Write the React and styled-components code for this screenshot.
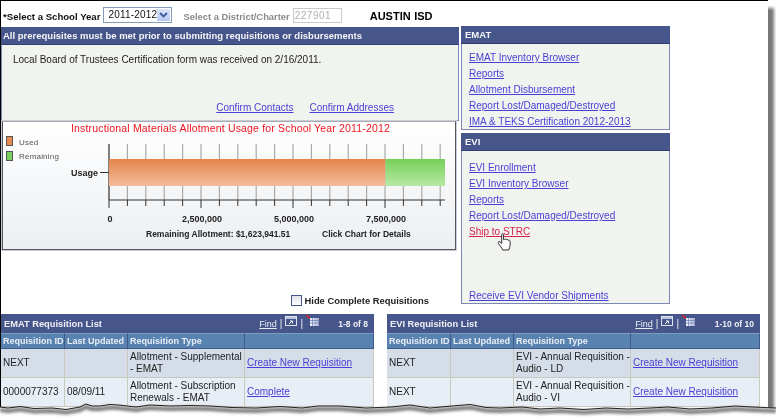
import React from "react";
import styled, { createGlobalStyle } from "styled-components";

const Global = createGlobalStyle`
  html, body { margin: 0; padding: 0; background: #fff; }
  body { font-family: "Liberation Sans", Arial, sans-serif; font-size: 10px; color: #111; }
`;

const Frame = styled.div`
  position: relative;
  width: 776px;
  height: 420px;
  overflow: hidden;
  background: #fff;
`;

const Sheet = styled.div`
  width: 767px;
  height: 500px;
  box-sizing: content-box;
  background: #fff;
  border-top: 1px solid #000;
  border-left: 1px solid #000;
  box-shadow: 6px 8px 3px #777;
  filter: blur(0.3px);
`;

const Columns = styled.div`
  display: flex;
  gap: 2px;
  height: 304px;
`;

const LeftCol = styled.div`
  width: 458px;
  display: flex;
  flex-direction: column;
`;

const YearBar = styled.div`
  height: 26px;
  display: flex;
  align-items: center;
  padding: 4px 0 0 2px;
  box-sizing: border-box;
  font-size: 9.6px;
  font-weight: bold;
  white-space: nowrap;
`;

const YearSelect = styled.div`
  width: 63px;
  height: 14px;
  margin: -3px 11px 0 3px;
  border: 1px solid #7f9db9;
  display: flex;
  align-items: center;
  justify-content: space-between;
  font-weight: normal;
  font-size: 10px;
  letter-spacing: 0.2px;
  padding-left: 4px;
`;

const SelectArrow = styled.span`
  width: 13px;
  height: 12px;
  margin-right: 1px;
  background: linear-gradient(#dbe5fa, #b5c8f0);
  display: flex;
  align-items: center;
  justify-content: center;
`;

const DisabledLabel = styled.span`
  color: #8a8a8a;
  font-size: 9.4px;
`;

const DistrictInput = styled.div`
  width: 46px;
  height: 13px;
  margin: -2px 0 0 3px;
  border: 1px solid #c9c9c9;
  color: #b0b0b0;
  font-weight: normal;
  font-size: 10px;
  padding-left: 1px;
  line-height: 13px;
  letter-spacing: 0.5px;
`;

const District = styled.span`
  margin-left: 28px;
  font-size: 11px;
  color: #000;
  word-spacing: 0.5px;
`;

const Panel = styled.section`
  background: #f1f3ef;
  border: 1px solid #7b88b4;
  border-top: 0;
  height: ${(p) => p.$height}px;
  box-sizing: border-box;
`;

const PanelTitle = styled.h2`
  margin: 0 -1px;
  height: 18px;
  line-height: 17px;
  background: #47568a;
  color: #f4f5f8;
  font-size: 9.5px;
  font-weight: bold;
  padding-left: ${(p) => p.$inset}px;
  border-bottom: 1px solid #2f3d70;
  box-sizing: border-box;
  white-space: nowrap;
`;

const Notice = styled.p`
  margin: 0;
  padding: 8px 0 0 11px;
  height: 45px;
  line-height: 13px;
  color: #222;
`;

const ConfirmRow = styled.div`
  display: flex;
  justify-content: flex-end;
  gap: 16px;
  padding: 2px 64px 0 0;
`;

const Link = styled.a`
  color: ${(p) => (p.$hot ? "#d8204e" : "#4a3fd6")};
  text-decoration: underline;
  font-size: 10px;
  line-height: 16px;
  white-space: nowrap;
`;

const ChartBox = styled.div`
  margin: 0 3px 0 1px;
  height: 129px;
  box-sizing: border-box;
  border: 1px solid #555;
  border-top-color: #aaa;
  background: linear-gradient(#fff, #eceff2);
  box-shadow: 0 0 0 1px #c8ccd8;
`;

const HideRow = styled.label`
  margin-top: auto;
  padding: 0 30px 0 0;
  height: 10px;
  display: flex;
  justify-content: flex-end;
  align-items: center;
  gap: 3px;
  font-weight: bold;
  font-size: 9.4px;
  color: #222;
  white-space: nowrap;
`;

const Box = styled.span`
  width: 9px;
  height: 9px;
  border: 1px solid #47568a;
  background: linear-gradient(#dfe3ea, #fff);
`;

const RightCol = styled.div`
  width: 209px;
  padding-top: 25px;
  display: flex;
  flex-direction: column;
  gap: 3px;
`;

const LinkList = styled.nav`
  display: flex;
  flex-direction: column;
  align-items: flex-start;
  padding: ${(p) => p.$top}px 0 0 7px;
  height: ${(p) => p.$fill}px;
  box-sizing: border-box;
`;

const Spacer = styled.div`
  flex: 1;
`;

const Tables = styled.div`
  display: flex;
  gap: 13px;
  margin-top: 9px;
`;

const Table = styled.div`
  width: 373px;
  flex: none;
`;

const TableBar = styled.div`
  height: 19px;
  background: #47568a;
  color: #eef0f5;
  display: flex;
  align-items: center;
  font-weight: bold;
  padding: 0 6px 0 3px;
`;

const TableTitle = styled.span`
  flex: 1;
  font-size: 9.3px;
`;

const Tools = styled.span`
  display: flex;
  align-items: center;
  gap: 3px;
  font-size: 10px;
  font-weight: normal;
  color: #e8ebf3;
`;

const FindLink = styled.span`
  text-decoration: underline;
  font-size: 9px;
`;

const Count = styled.span`
  width: ${(p) => p.$w}px;
  text-align: right;
  font-size: 8.5px;
  font-weight: bold;
`;

const ToolIcon = styled.svg`
  margin-top: -4px;
`;

const Grid = styled.div`
  display: grid;
  grid-template-columns: 64px 63px 117px 129px;
`;

const HeadCell = styled.div`
  height: 16px;
  line-height: 14px;
  box-sizing: border-box;
  background: #5882b0;
  color: #e9eef5;
  font-weight: bold;
  font-size: 9px;
  padding-left: 2px;
  white-space: nowrap;
  overflow: hidden;
  border-right: 1px solid #3d5a8a;
  border-bottom: 1px solid #3d5a8a;
  border-top: 1px solid #7d9cc4;
`;

const Cell = styled.div`
  height: 29px;
  box-sizing: border-box;
  background: ${(p) => (p.$odd ? "#e8eef5" : "#d5dde8")};
  border-right: 1px solid #c9c9be;
  border-bottom: 1px solid #c9c9be;
  padding-left: 2px;
  display: flex;
  align-items: center;
  line-height: 12px;
  color: #222;
  font-size: 10px;
`;

const Torn = styled.svg`
  position: absolute;
  left: 0;
  bottom: 0;
  width: 776px;
  height: 20px;
`;

const Cursor = styled.svg`
  position: absolute;
  left: 497px;
  top: 233px;
  width: 15px;
  height: 18px;
`;

function Chart() {
  const ticks = Array.from({ length: 19 }, (_, i) => 108 + i * 18.4);
  return (
    <svg width="454" height="127" viewBox="2 122 454 127">
      <defs>
        <linearGradient id="used" x1="0" x2="0" y1="0" y2="1">
          <stop offset="0" stopColor="#e5854a" />
          <stop offset="1" stopColor="#f3bc9c" />
        </linearGradient>
        <linearGradient id="left" x1="0" x2="0" y1="0" y2="1">
          <stop offset="0" stopColor="#76d05a" />
          <stop offset="1" stopColor="#b8e8a4" />
        </linearGradient>
      </defs>
      <g fontFamily="'Liberation Sans', Arial, sans-serif">
        <text x="229.5" y="132" textAnchor="middle" fontSize="10.5" fill="#f0141e" letterSpacing=".17">
          Instructional Materials Allotment Usage for School Year 2011-2012
        </text>
        <rect x="5.5" y="136.5" width="6" height="9" fill="#e98a4e" stroke="#555" />
        <rect x="5.5" y="151.5" width="6" height="9" fill="#7ad05c" stroke="#555" />
        <text x="18" y="145" fontSize="8" fill="#555" letterSpacing=".2">Used</text>
        <text x="18" y="159" fontSize="8" fill="#555" letterSpacing=".2">Remaining</text>
        {ticks.map((x) => (
          <line key={x} x1={x} x2={x} y1="144" y2="200" stroke="#aaa" strokeWidth="1.2" />
        ))}
        {ticks.map((x, i) => (
          <line key={i} x1={x} x2={x} y1="200" y2={i % 5 === 0 ? 208 : 206} stroke="#333" />
        ))}
        <line x1="108" x2="108" y1="144" y2="200" stroke="#333" />
        <line x1="108" x2="444" y1="200" y2="200" stroke="#333" />
        <line x1="99" x2="108" y1="172.5" y2="172.5" stroke="#333" />
        <rect x="108" y="159" width="276.5" height="27" fill="url(#used)" />
        <rect x="384.5" y="159" width="59.5" height="27" fill="url(#left)" />
        <g fontSize="9" fontWeight="bold" fill="#222">
          <text x="70" y="176">Usage</text>
          <text x="109" y="222" textAnchor="middle">0</text>
          <text x="201" y="222" textAnchor="middle">2,500,000</text>
          <text x="293" y="222" textAnchor="middle">5,000,000</text>
          <text x="385" y="222" textAnchor="middle">7,500,000</text>
        </g>
        <g fontSize="8.5" fontWeight="bold" fill="#222">
          <text x="145" y="237">Remaining Allotment: $1,623,941.51</text>
          <text x="321" y="237">Click Chart for Details</text>
        </g>
      </g>
    </svg>
  );
}

function ToolIcons() {
  return (
    <>
      <span>|</span>
      <ToolIcon width="12" height="11" viewBox="0 0 12 11">
        <rect x=".5" y=".5" width="11" height="9" fill="#47568a" stroke="#dfe3ee" />
        <rect x="1" y="1" width="10" height="2" fill="#b9c4de" />
        <path d="M4 8 L7 5 M5 5 H7.5 V7.5" stroke="#fff" fill="none" />
      </ToolIcon>
      <span>|</span>
      <ToolIcon width="13" height="13" viewBox="0 0 13 13">
        <path d="M4 3 H12.5 V11 H4 Z" fill="#eef1fa" />
        <path d="M4 5.5 H12.5 M4 8 H12.5 M6.5 3 V11 M9 3 V11 M11 3 V11" stroke="#6f80b4" strokeWidth=".8" />
        <path d="M0 0 L4 3.5" stroke="#e02020" strokeWidth="1.6" />
      </ToolIcon>
    </>
  );
}

function ReqTable({ title, count, countWidth, rows }) {
  return (
    <Table>
      <TableBar>
        <TableTitle>{title}</TableTitle>
        <Tools>
          <FindLink>Find</FindLink>
          <ToolIcons />
        </Tools>
        <Count $w={countWidth}>{count}</Count>
      </TableBar>
      <Grid>
        <HeadCell>Requisition ID</HeadCell>
        <HeadCell>Last Updated</HeadCell>
        <HeadCell>Requisition Type</HeadCell>
        <HeadCell />
        {rows.map((r, i) => (
          <React.Fragment key={i}>
            <Cell $odd={i % 2}>{r.id}</Cell>
            <Cell $odd={i % 2}>{r.date}</Cell>
            <Cell $odd={i % 2}>{r.type}</Cell>
            <Cell $odd={i % 2}>
              <Link>{r.action}</Link>
            </Cell>
          </React.Fragment>
        ))}
      </Grid>
    </Table>
  );
}

const ematRows = [
  { id: "NEXT", date: "", type: "Allotment - Supplemental - EMAT", action: "Create New Requisition" },
  { id: "0000077373", date: "08/09/11", type: "Allotment - Subscription Renewals - EMAT", action: "Complete" },
];

const eviRows = [
  { id: "NEXT", date: "", type: "EVI - Annual Requisition - Audio - LD", action: "Create New Requisition" },
  { id: "NEXT", date: "", type: "EVI - Annual Requisition - Audio - VI", action: "Create New Requisition" },
];

const tear =
  "M0 7 L8 8 L20 6.5 L34 8.5 L52 8 L66 9.5 L80 7 L86 4 L92 6 L100 6 L110 4.5 L118 5 L136 7 L150 5 L170 6 L190 5.5 L210 6 L232 7.5 L256 8 L280 6.5 L302 8 L318 6 L340 6 L366 8 L392 7 L410 5 L430 8 L452 6 L470 4.5 L486 7.5 L500 8 L522 7 L540 9 L560 8 L584 9.5 L606 8 L628 9 L650 8 L668 7 L690 9 L712 8 L735 6 L752 7 L776 8";

export default function App() {
  return (
    <Frame>
      <Global />
      <Sheet>
        <Columns>
          <LeftCol>
            <YearBar>
              *Select a School Year
              <YearSelect>
                2011-2012
                <SelectArrow>
                  <svg width="9" height="6" viewBox="0 0 9 6">
                    <path d="M1 1 L4.5 4.5 L8 1" stroke="#3d5a9a" strokeWidth="1.8" fill="none" />
                  </svg>
                </SelectArrow>
              </YearSelect>
              <DisabledLabel>Select a District/Charter</DisabledLabel>
              <DistrictInput>227901</DistrictInput>
              <District>AUSTIN ISD</District>
            </YearBar>
            <Panel $height={94}>
              <PanelTitle $inset={2}>
                All prerequisites must be met prior to submitting requisitions or disbursements
              </PanelTitle>
              <Notice>Local Board of Trustees Certification form was received on 2/16/2011.</Notice>
              <ConfirmRow>
                <Link>Confirm Contacts</Link>
                <Link>Confirm Addresses</Link>
              </ConfirmRow>
            </Panel>
            <ChartBox>
              <Chart />
            </ChartBox>
            <HideRow>
              <Box />
              Hide Complete Requisitions
            </HideRow>
          </LeftCol>
          <RightCol>
            <Panel $height={104}>
              <PanelTitle $inset={4}>EMAT</PanelTitle>
              <LinkList $top={6} $fill={86}>
                <Link>EMAT Inventory Browser</Link>
                <Link>Reports</Link>
                <Link>Allotment Disbursement</Link>
                <Link>Report Lost/Damaged/Destroyed</Link>
                <Link>IMA &amp; TEKS Certification 2012-2013</Link>
              </LinkList>
            </Panel>
            <Panel $height={171}>
              <PanelTitle $inset={4}>EVI</PanelTitle>
              <LinkList $top={9} $fill={153}>
                <Link>EVI Enrollment</Link>
                <Link>EVI Inventory Browser</Link>
                <Link>Reports</Link>
                <Link>Report Lost/Damaged/Destroyed</Link>
                <Link $hot>Ship to STRC</Link>
                <Spacer />
                <Link>Receive EVI Vendor Shipments</Link>
              </LinkList>
            </Panel>
          </RightCol>
        </Columns>
        <Tables>
          <ReqTable title="EMAT Requisition List" count="1-8 of 8" countWidth={49} rows={ematRows} />
          <ReqTable title="EVI Requisition List" count="1-10 of 10" countWidth={59} rows={eviRows} />
        </Tables>
      </Sheet>
      <Cursor viewBox="0 0 16 19">
        <path
          d="M5 1.5 C5 .4 7 .4 7 1.5 V7 L8 7 C8.5 6 10 6 10 7.2 C10.6 6.4 12 6.6 12 7.8 C12.8 7.2 14 7.6 14 9 V13 C14 15 13 16 12.5 18 H6 C5.5 16 3.5 14 1.5 11 C.6 9.6 2 8.4 3.2 9.4 L5 11 Z"
          fill="#fff"
          stroke="#222"
          strokeWidth="1"
        />
      </Cursor>
      <Torn viewBox="0 0 776 20">
        <defs>
          <filter id="soft" x="-5%" y="-80%" width="110%" height="300%">
            <feGaussianBlur stdDeviation="1.8" />
          </filter>
        </defs>
        <path d={`${tear} V20 H0 Z`} fill="#fff" />
        <path d={tear} transform="translate(0 3)" fill="none" stroke="#777" strokeWidth="4" filter="url(#soft)" />
        <path d={tear} fill="none" stroke="#222" strokeWidth="1" />
      </Torn>
    </Frame>
  );
}
